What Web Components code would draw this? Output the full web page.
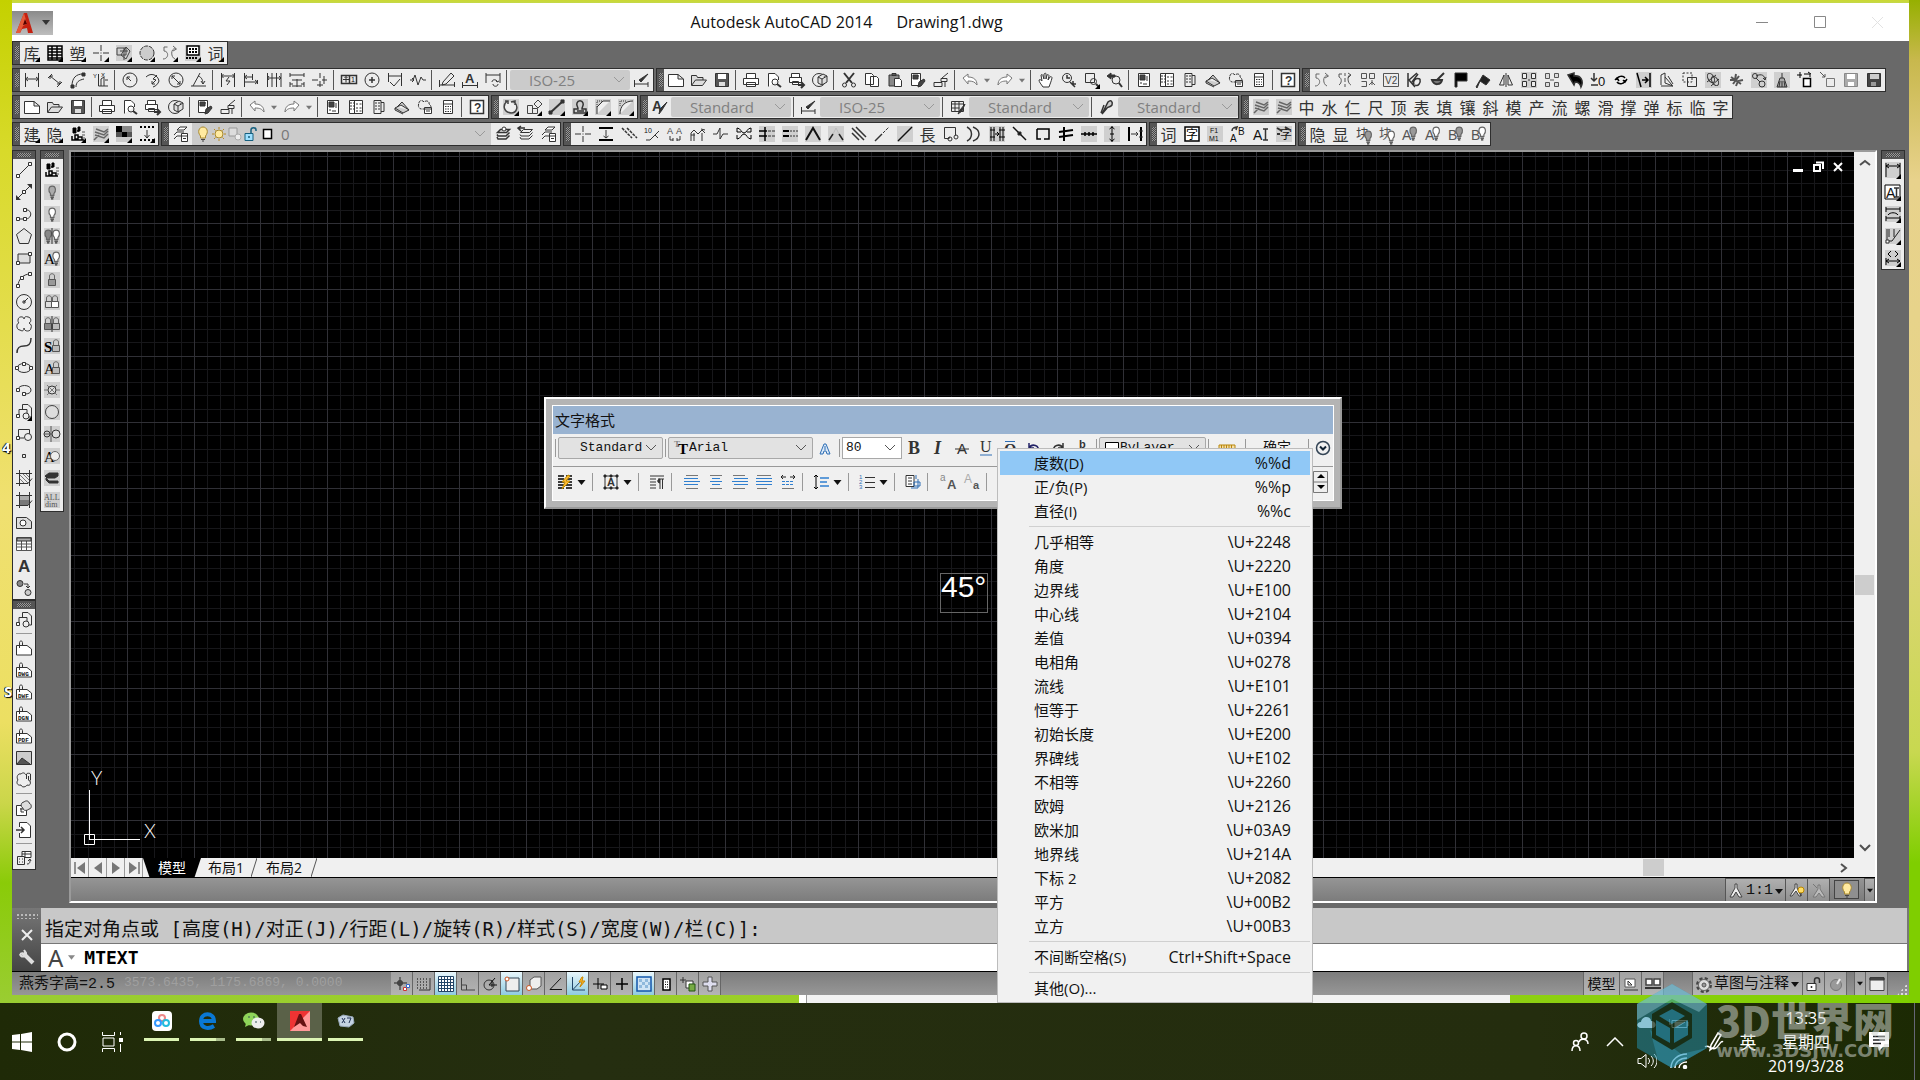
<!DOCTYPE html>
<html lang="zh-CN">
<head>
<meta charset="utf-8">
<title>Autodesk AutoCAD 2014</title>
<style>
html,body{margin:0;height:100%;overflow:hidden}
body{font-family:"Open Sans","Noto Sans CJK SC",sans-serif;font-size:15px;color:#111}
</style>
</head>
<body>
<cad-desktop></cad-desktop>
<script>
/* Icon library: every entry is a 16x16 drawing, either a bare path or svg markup. */
const T=(x,y,s,t,f='currentColor',ff='Liberation Sans',w='400')=>`<text x="${x}" y="${y}" font-size="${s}" fill="${f}" stroke="none" font-family="${ff}, 'Noto Sans CJK SC', sans-serif" font-weight="${w}">${t}</text>`;
const p=(d,a='')=>`<path d="${d}" ${a}/>`;
const bulb=(x,y,f)=>`<g transform="translate(${x} ${y}) scale(1.15)"><path d="M3 7.500C1 5.500 1 1 4.500 1S8 5.500 6 7.500V9H3z" fill="${f}" stroke="#666"/><path d="M3 10.500h3M3.500 12h2" stroke="#333"/></g>`;
const lockI=(x,c='#fff')=>`<g transform="translate(${x} 0)"><path d="M2.500 8.500V4c0-3 5-3 5 0v3" stroke="#666"/><path d="M1.500 7.500h7v6h-7z" fill="${c}" stroke="#555"/></g>`;
const attach=t=>p(`M.500 15V5.500H11L15.500 9v6z`,'fill="#fff"')+p('M3.500 8V2.500c0-2 3-2 3 0V6')+(t?T(2,14,6,t,'#111','Liberation Mono','700'):'');
const gz='<path d="M0 0h16v16H0z" fill="#cfcfcf" stroke="none"/>';
const layers='M5.500 3.500h9l-3 3h-9zM2 8.500l1 1.500h8l3.500-3.500M2 11l1 2h8l3.500-3.500';
const I={
 table:p('M1 1h14v14H1zM1 4h14M1 7h14M1 10h14M1 13h14M5 1v14M10 1v14','stroke="#000" stroke-width="1.500"'),
 cross:p('M8 0v6M8 7.500v1M8 10v6M0 8h6M10 8h6'),
 blk:gz+p('M1 3h9v7H1zM5 10l5-8 4 4-4 8zM4 6h8M8 3v12','stroke="#444"'),
 circg:'<circle cx="8" cy="8" r="7" fill="#ccc" stroke="#333" stroke-dasharray="4 1"/>',
 curl:p('M2 2h3.500M2 2v4c5 0 5 8-1 8M14 4c-5-2-6 8-1 10M11 1l3.500 3-3.500 2','stroke="#666"'),
 calc2:gz+p('M2 1h12v9H2z','fill="#fff" stroke="#000" stroke-width="1.500"')+p('M4 4h8M4 7h8M1 13h12','stroke="#000" stroke-width="2" stroke-dasharray="2 1"'),
 dlin:p('M1.500 1v14M14.500 1v14M1.500 7h13M4 5L1.500 7 4 9M12 5l2.500 2L12 9'),
 dali:p('M1 6l4-4M10 15l5-5M3 4l10 8M3 7V4h3M10 12h3V9'),
 darc:p('M2 14C2 6 6 2 13 2M6 15c0-5 3-7 8-8')+p('M1 13h3v3H1zM12 1h3v3h-3z','fill="#333"'),
 dord:p('M5.500 2v12M5.500 14H15M8 14V7l3-2v9M12 8h3')+T(0,6,6,'Y')+T(8,5,6,'X'),
 drad:'<circle cx="8" cy="8" r="7"/>'+p('M9 9L5 5M5 8V5h3'),
 djog:p('M1 5c5-5 12-2 13 4-1 3-3 5-6 6M12 3L8 7l3 1-4 4M7 9v3h3'),
 ddia:'<circle cx="8" cy="8" r="7"/>'+p('M4 4l8 8M4 7V4h3M9 12h3V9'),
 dang:p('M0 14h15M2 14L9 1M7 4c4 1 5 5 5 8M10 9l2 3 2-3'),
 qdim:p('M1.500 1v14M14.500 1v14M1.500 4h13M9 5L6 9h4l-3 4M3.500 2l-2 2 2 2M12.500 2l2 2-2 2'),
 dbas:p('M1.500 1v14M9.500 2v6M14.500 8v4M1.500 5h8M1.500 10h13M4 3L1.500 5 4 7M12 8l2.500 2L12 12'),
 dcon:p('M1.500 1v14M6 1v14M10.500 1v14M15 1v14M1.500 6H15M3 4L1.500 6 3 8M13 4l2 2-2 2'),
 dspc:p('M1 1v4M15 1v4M1 3h14M3 8h10M3 14h10M8 7v8M1 10v5M15 10v5M1 12h3M12 12h3'),
 dbrk:p('M8 1v5M8 9v6M0 8h6M10 8h5M12 4v8M5 13h6'),
 tol:p('M.500 3.500h15v8H.500zM8.500 3.500v8','stroke-width="1.500"')+p('M5 4.500v6M2 7.500h6M3.500 6L5 4.500 6.500 6')+T(10,10,7,'1'),
 cmark:'<circle cx="8" cy="8" r="7"/>'+p('M8 5v6M5 8h6','stroke-width="1.500"'),
 dinsp:p('M1.500 1v9M14.500 1v13M1.500 4h13M3 10l4 4 6-7'),
 djl:p('M0 8h3l2-5 3 10 3-8 2 3h3M2 6l2 2-2 2'),
 dedit:p('M.500 8v7M15.500 10v5M.500 13h15M4 10l8-9 3 3-8 8-4 1z'),
 dtedit:p('M.500 10v6M15.500 10v6M.500 13.500h15')+T(3,11,13,'A','#333','Liberation Sans','700'),
 dupd:p('M1 1v10M15 1v10M1 3h14M7 10c0-3 5-3 5 0M13 12c0 3-5 3-5 0M11 8l1 2 2-1'),
 dsty:p('M.500 8v7M14 10v5M.500 12H14M14 2L7 10l-2-2z','fill="#333"'),
 new:p('M.500 2.500H10L15.500 7v7.500H.500zM10 2.500V7h5.500','fill="#fff"'),
 open:p('M.500 13V3.500h5l1 2H12V8M.500 13.500l4-5.500h11l-4 5.500z','fill="#ddd"'),
 save:p('M1.500 1.500h13v13h-13z','fill="#555"')+p('M4 2h8v5H4z','fill="#fff" stroke="none"')+p('M5 10h6v4H5z','fill="#ddd" stroke="none"'),
 print:p('M3.500 6V1.500h9V6M.500 6.500h15v6H.500zM3.500 10.500h9v4h-9z','fill="#fff"'),
 prev:p('M2.500 14.500v-13H9L12.500 5v3','fill="#fff"')+'<circle cx="9" cy="10" r="3"/>'+p('M11 12l4 3','stroke-width="2"'),
 pub:p('M2.500 5V1.500h8V5M.500 5.500h12v5H.500zM3.500 9.500h6v3h-6z','fill="#fff"')+p('M9 13h6M12 10l3 3-3 3','stroke-width="2"'),
 ball:'<circle cx="7" cy="8" r="6.500"/>'+p('M6 5l5-3 4 2v6l-5 3-4-2zM6 5l4 2 5-3M10 7v6','fill="#ddd"'),
 match:p('M1.500 1.500h9v12h-9zM3 4h6','fill="#fff"')+p('M3 3h5v4H3zM9 10l5-3 1 2-4 5-3 1z','fill="#444"'),
 mspec:p('M1 10.500h8v4H1zM8 6.500h6v3H8zM9 6l6-5M12 10v5','fill="#eee"'),
 undo:p('M1 6l5-4v3c6 0 9 3 9 8-2-3-4-4-9-4v3z','fill="#fff" stroke="#777"'),
 redo:p('M15 6l-5-4v3C4 5 1 8 1 13c2-3 4-4 9-4v3z','fill="#fff" stroke="#777"'),
 prop:p('M2.500 1.500h11v13h-11z','fill="#fff"')+p('M4 3h5v5H4z','fill="#444"')+p('M4 11h2M7 12h4M11 4v5'),
 dc:p('M1.500 1.500h13v13h-13zM6.500 2v13','fill="#fff"')+p('M2 4h4M2 7h4M2 10h4M8 5h2M11.500 5h2M8 9h2M11.500 9h2M8 12h2M11.500 12h2','stroke-dasharray="2 1"'),
 tp:p('M3 1.500h7v13H3zM10 3.500h3v9h-3','fill="#eee"')+p('M4 4h2M7 4h2M4 7h2M7 7h2M4 10h2M7 10h2'),
 ssm:p('M1 9l8 5 6-3-8-5zM3 8l5-5 7 8M1 9v2l8 4','fill="#ccc"'),
 mark:p('M2 4c0-3 4-3 5-1 2-2 6-1 5 2 3 2 2 4 0 5H4C1 9 1 6 2 4z','stroke-dasharray="3 1"')+p('M7.500 8.500h7v6h-7zM7.500 10h7M9 12h4','fill="#fff"'),
 calc:p('M3.500 1.500h9v13h-9zM3.500 5h9','fill="#fff"')+p('M5 7.500h6M5 10h6M5 12.500h6','stroke-dasharray="1.500 1"'),
 help:p('M1.500 1.500h13v13h-13z','fill="#fff" stroke-width="1.500"')+T(5,13,12,'?','#333','Liberation Sans','700'),
 cut:p('M3 1l8 10M13 1L5 11','stroke-width="2"')+'<circle cx="3.500" cy="13" r="2"/><circle cx="12.500" cy="13" r="2"/>',
 copy:p('M1.500 1.500h6l2 2v9h-8zM6.500 4.500h6l2 2v8h-8z','fill="#fff"'),
 paste:p('M2 3h10v11H2zM5 1.500h4v2H5z','fill="#888"')+p('M7.500 6.500h5l2 2v6h-7z','fill="#fff"'),
 pan:p('M5 15c-2-3-4-5-4-7 1-1 2 0 3 1L3 3c1-1 2 0 2 1l1 3V2c1-1 2-1 2 0v5l1-4c1-1 2 0 2 1l-1 4 2-3c1-1 2 0 2 1-1 4-2 6-3 9z','fill="#fff"'),
 zrt:'<circle cx="6" cy="6" r="4.500"/>'+p('M6 3v3h3M9 10l5 5M12 9v3h3','stroke-width="1.500"'),
 zwin:p('M1.500 1.500h9v9h-9z')+'<circle cx="9.500" cy="9.500" r="3"/>'+p('M12 12l3 3','stroke-width="2"'),
 zprev:'<circle cx="9" cy="8" r="4"/>'+p('M12 11l3 4','stroke-width="2"')+p('M0 4l4-3v2h4v2H4v2z','fill="#333"'),
 mir2:p('M2 2h3M2 2v3c3 1 3 6 0 8M14 3c-4-1-4 8 0 10M8 1v3M8 6v4M8 12v3M11 1l3 2-3 3','stroke="#555"'),
 sq4:p('M1.500 1.500h5v5h-5zM9.500 1.500h5v5h-5zM1.500 9.500h5v5h-5M12 8v5M9 13l3-3 3 3','stroke="#555"'),
 v2:p('M.500 1.500h15v13H.500z','stroke="#555"')+T(2,12,10,'V2','#444'),
 kk:p('M2 1v14M3 8l8-7M3 8l6 7M6 10l6-8M8 13c-2-4 2-8 6-6M9 13c3 2 6-2 5-6','stroke-width="1.500"'),
 brush:p('M3 8h10c-1 5-8 6-10 0zM15 1L8 8','fill="#777" stroke-width="2"'),
 flag:p('M4 1h11v8H5v6H3V1z','fill="#000"'),
 flag2:p('M1 15L8 3l7 5-4 5-6-4-3 7z','fill="#222"'),
 mir:p('M6 3v10H1.500zM10 3v10h4.500zM8 1v14'),
 arr:gz+p('M1.500 1.500h4v5h-4zM10.500 1.500h4v5h-4zM1.500 9.500h4v5h-4zM10.500 9.500h4v5h-4zM7 8h2','fill="#eee"'),
 arr2:p('M1.500 1.500h4v5h-4zM10.500 1.500h4v4h-4zM1.500 10.500h4v4h-4zM10.500 10.500h4v4h-4zM6 8h4','stroke="#555" fill="#ddd"'),
 uarr:p('M1 3l6-2v3c7-1 10 5 7 11-1-4-4-5-6-5l-1 3z','fill="#000" stroke-width="1.500"'),
 z0:p('M4 1v8M1 6l3 3 3-3M1 13h7','stroke-width="1.500"')+T(8,14,13,'0'),
 rr:p('M4 8c0-4 6-5 8-2M12 8c0 4-6 5-8 2M2 8l2-2 2 3M10 8l2 2 2-3','stroke="#000" stroke-width="1.500"'),
 ext:gz+p('M1 1l4 14M14 1v14M6 8h5M9 5l3 3-3 3','stroke="#000" stroke-width="1.500"'),
 para:p('M2 13V3l4-2v10l8 3H2M6 5l7 8M9 4l5 8','fill="#eee"'),
 dsq:p('M1 1h9v9H1z','stroke-dasharray="2 1.500"')+p('M5.500 5.500h9v9h-9z'),
 coil:gz+'<ellipse cx="6" cy="6" rx="3" ry="5" transform="rotate(-30 6 6)"/><ellipse cx="10" cy="9" rx="3" ry="5" transform="rotate(-30 10 9)"/>'+p('M2 10l9-7M6 14l8-7'),
 coil2:p('M3 5l10 7M2 8h5l1-6M8 14l2-5 5-1M11 4l-6 8','stroke="#555" stroke-width="2"'),
 gear2:gz+'<circle cx="4" cy="4" r="2.500"/><circle cx="11" cy="12" r="3"/>'+p('M5 4c6-3 9 0 9 4M5 6l4 4M12 6l2 2 1-3'),
 broom:gz+p('M8 1v5M6 6h4l3 9H3zM6 9l-1 6M8 9v6M10 9l1 6','fill="#aaa"'),
 plus2:p('M6.500 6.500h7v8h-7z','stroke="#000" stroke-width="1.500" fill="#fff"')+p('M0 3h5M3 0v6M7 2h6v3M11 0l3 2','stroke="#000"'),
 sqin:p('M6.500 6.500h8v8h-8z','stroke="#777"')+p('M0 0l5 5M5 2v3H2','stroke="#555"'),
 disk:p('M1.500 1.500h13v13h-13z','fill="#aaa" stroke="#888"')+p('M4 2h8v5H4zM5 10h6v4H5z','fill="#fff" stroke="none"'),
 disk2:p('M1.500 1.500h13v13h-13z','fill="#444"')+p('M4 2h9v5H4z','fill="#ccc" stroke="none"')+p('M5 10h5v4H5z','fill="#999" stroke="none"'),
 rot:gz+p('M4 2c-5 5-3 11 4 12 6 0 8-7 3-11M2 2h3v3M8 3l4-1v4','stroke="#444" stroke-width="1.500" fill="#eee"'),
 scale:p('M1.500 6.500h5v8h-5zM6.500 9.500h5v5h-5zM8 5l4-4 4 4-4 4z','stroke="#444"'),
 line2:gz+p('M1 14L14 2','stroke-width="2"')+p('M0 12h3v3H0zM12 1h3v3h-3z','fill="#333"'),
 stamp:gz+p('M2 14h12v-4h-4c0-3 2-3 1-6-1-3-5-3-6 0-1 3 1 3 1 6H2zM5 12h7','stroke-width="1.500"'),
 chf:gz+p('M2 15V8l6-6h7','fill="#eee"')+p('M2 8V2h6','stroke-dasharray="1 1"'),
 fil:gz+p('M2 15C2 7 7 2 15 2','fill="#eee"')+p('M2 7V2h6','stroke-dasharray="1 1"'),
 tsty:T(0,12,14,'A','#333','Liberation Sans','700')+p('M15 3l-5 8-3 4 1-5z','fill="#333"'),
 tbsty:p('M1.500 2.500h12v10h-12zM1.500 5h12M1.500 9h8M5 3v9M9 3v9')+p('M15 5l-5 6-2 4 4-3z','fill="#333"'),
 mlsty:p('M2 14L5 6M9 3c3-3 5 0 4 3-2 3-4 1-5 3l-5 6z','fill="#ccc" stroke-width="1.500"'),
 lay3:gz+p('M3 3l8 3 4-3M2 6l9 3 4-4M2 9l9 3 4-4M1 14l5-5','stroke="#666" stroke-width="1.500"'),
 swirl:gz+'<ellipse cx="8" cy="8" rx="6" ry="3" transform="rotate(-35 8 8)"/><ellipse cx="9" cy="10" rx="6" ry="3" transform="rotate(-35 9 10)"/>'+p('M2 4l5-3 6 2'),
 bars:p('M2 10v4h12M5 13V9h3v4zM7 5h2M8 11h4v3','stroke="#000" stroke-width="1.500"')+p('M3 2h3v5H3zM8 1h2v4H8z','fill="#000" stroke="#000"')+p('M12 6h3M12 9h3M12 12h3','stroke="#555"'),
 chk:p('M0 0h16v16H0z','fill="#ccc" stroke="none"')+p('M0 0h6v6H0zM6 6h5v5H6z','fill="#000" stroke="none"')+p('M11 0h5v6h-5zM6 0h5v6H6z','fill="#888" stroke="none"')+p('M0 6h6v5H0zM11 6h5v5h-5z','fill="#555" stroke="none"'),
 dots:p('M1 1h14','stroke="#000" stroke-width="2" stroke-dasharray="2 2"')+p('M1 14h14','stroke="#000" stroke-width="2" stroke-dasharray="2 2"')+p('M8 4v8M5.500 9L8 12l2.500-3'),
 laypr:p('M4 4h7l3-3H7zM1 9l3-3h7M1 13l3-3h4M8.500 7.500h6v8h-6zM8.500 10h6M10 12.500h3','fill="#fff"'),
 laya:p(layers,'stroke-width="1.500"')+'<circle cx="9" cy="3" r="2" fill="#fff"/>',
 layb:p(layers)+p('M0 2h7M3 0L0 2l3 3','stroke-width="1.500"'),
 ibeam:p('M1 2h14M1 14h14','stroke="#000" stroke-width="2"')+p('M8 4v8M5.500 10L8 12l2.500-2'),
 dd:p('M1 2l10 10M6 2l10 10','stroke-dasharray="3 1" stroke-width="1.500"'),
 ten:T(0,7,7,'10')+p('M2 14h4l9-9M11 9l3 3'),
 aa:T(0,8,9,'A','#444')+T(9,8,9,'A','#444')+p('M3 10v4h3M13 10v4h-3M6 12v3M10 12v3'),
 mm:p('M1 15V7l3-3 4 4 4-4 3 3M4 7v8M12 7v8M1 9h4M11 3l4 1'),
 zz:p('M0 8h4l3-6v11l3-5h5'),
 xx:p('M1 2c4 0 4 5 7 5s3-5 7-5M1 13c4 0 4-5 7-5s3 5 7 5M1 2v4h4M15 2v4h-4M1 13V9M15 13V9','stroke="#000"'),
 hh:gz+p('M9 5h7M9 10h7','stroke-dasharray="3 1"')+p('M6 1v14M0 5h8M0 10h8','stroke="#000" stroke-width="1.500"'),
 hh2:gz+p('M1 5h6M1 10h6','stroke="#000" stroke-width="2"')+p('M8 5h8M8 10h8','stroke-dasharray="2 1"'),
 vv:gz+p('M1 14L8 2l7 12','stroke="#111" stroke-width="2"'),
 vv2:gz+p('M1 14l4-6M15 14l-4-6','stroke="#222" stroke-width="1.500"')+p('M5 8l3-6 3 6','stroke="#bbb"'),
 hat:p('M1 2l12 12M5 1l10 10M1 7l7 7','stroke-width="1.500"'),
 ldot:p('M1 15L8 8','stroke-width="1.500"')+p('M9 7l6-6','stroke-dasharray="3 1"'),
 lgz:gz+p('M1 15L15 1','stroke="#111" stroke-width="1.500"'),
 boxr:p('M1.500 1.500h11v8M1.500 1.500v11h5M4 13l3-2')+'<circle cx="7" cy="13" r="2"/><circle cx="13" cy="11" r="2"/>',
 arcs:p('M1 1c6 3 6 11 0 14M7 1c8 3 8 11 0 14','stroke-width="1.500"'),
 hdim:gz+p('M2 1v14M5 1v14M11 1v14M14 1v14M1 4h5M1 11h5M10 4h6M10 11h6M6 8h4M8 6l2 2-2 2','stroke="#000"'),
 back:p('M1 1l13 13','stroke="#111" stroke-width="1.500"')+p('M6 6h3v3H6z','fill="#111"'),
 rect2:p('M2 3h12v10h-5M2 3v10h4M14 6v4','stroke="#000" stroke-width="1.500"'),
 hash:p('M1 6l14-2M1 11l14-2M6 15V1','stroke="#000" stroke-width="2"'),
 hl:gz+p('M0 8h16M4 6v4M8 6v4M12 6v4','stroke="#000" stroke-width="1.500"'),
 vl:gz+p('M8 0v16M5.500 3L8 1l2.500 2M5.500 13L8 15l2.500-2M6 8h4','stroke="#000"'),
 vs:p('M2 1v14M14 1v14','stroke="#000" stroke-width="2"')+p('M4 8h7M9 6l2 2-2 2M12 5h4M12 11h4'),
 zi:p('M1 1h14v14H1z','fill="#fff" stroke="#000" stroke-width="1.500"')+T(2,13,12,'字','#000'),
 f1:gz+T(3,7,7,'F1')+T(2,15,7,'M1'),
 ab:T(0,16,10,'A')+T(8,9,10,'B')+p('M2 5c0-3 3-4 5-4M4 2l3-1-1 3','stroke-width="1.500"'),
 ai:T(0,14,14,'A')+p('M10 3h5M10 14h5M12.500 3v11','stroke-width="1.500"'),
 zix:gz+T(4,13,12,'字')+p('M1 2l5 3M1 8h3M9 1l5 3','stroke-width="2"'),
 kb1:T(0,12,13,'块','#444')+bulb(7,4,'#999'),kb2:T(0,12,13,'块','#555')+bulb(7,4,'#fff'),
 ab1:T(0,14,14,'A','#555')+bulb(6,0,'#999'),ab2:T(0,14,14,'A','#555')+bulb(6,0,'#fff'),
 bb1:T(0,14,14,'B','#555')+bulb(6,0,'#999'),bb2:T(0,14,14,'B','#555')+bulb(6,0,'#fff'),
 /* draw palette */
 line:p('M2.500 13.500l11-11')+p('M.500 12.500h3v3h-3zM12.500.500h3v3h-3z','fill="#fff"'),
 xline:p('M1 15L15 1')+p('M0 16v-5l5 5zM16 0v5l-5-5z','fill="#333" stroke="none"')+p('M6.500 6.500h3v3h-3z','fill="#fff"'),
 pline:p('M2 13h7M8 4c9-2 9 10 0 9M7 4h2')+p('M.500 11.500h3v3h-3zM7.500 2.500h3v3h-3zM7.500 11.500h3v3h-3z','fill="#fff"'),
 polyg:p('M8 .500l7.500 6-3 9h-9l-3-9z','fill="#e8e8e8"'),
 rect:p('M2 4h12v9H2z','fill="#ddd"')+p('M.500 11.500h3v3h-3zM12.500 2.500h3v3h-3z','fill="#fff"'),
 arc:p('M2 14C2 8 7 2 14 2')+p('M.500 12.500h3v3h-3zM4.500 4.500h3v3h-3zM12.500.500h3v3h-3z','fill="#fff"'),
 circ:'<circle cx="8" cy="8" r="7.500" fill="#eee"/>'+p('M8 8l4-4M7 7h2v2H7z'),
 cloud:p('M8 3c0-3-6-3-6 1 0 1 0 2 1 3-3 0-3 7 1 7 3 2 4 0 4-2 0 4 7 4 7 0 1-2 0-4-2-5 3-1 2-6-1-6-2-1-4 0-4 2z','fill="#eee"'),
 spl:p('M1 15c0-6 3-7 7-7s7-1 7-8','stroke-width="1.500"'),
 ell:'<ellipse cx="8" cy="8" rx="7" ry="4.500"/>'+p('M-.500 6.500h3v3h-3zM13.500 6.500h3v3h-3zM6.500 2.500h3v3h-3z','fill="#fff"'),
 ella:p('M2 8c0-6 13-6 13 0 0 3-3 4-6 4')+p('M.500 6.500h3v3h-3zM6.500 10.500h3v3h-3z','fill="#fff"'),
 ins:p('M6.500 6V.500H12L15.500 4v9H12M3 12V5.500h8V9','fill="#eee"')+'<circle cx="10" cy="12" r="3" fill="#eee"/>'+p('M.500 10.500h3v3h-3z','fill="#fff"'),
 mkb:p('M2.500 12V3.500h11V9M2 12h6','fill="#eee"')+'<circle cx="12" cy="11" r="3.500" fill="#eee"/>'+p('M.500 10.500h3v3h-3z','fill="#fff"'),
 pt:p('M6.500 6.500h3v3h-3z'),
 hatch:p('M3.500 0v16M0 3.500h16M13.500 0v16M0 13.500h12l4-5')+p('M4 5l8 8M4 9l4 4M7 4l6 6M10 4l3 3','stroke="#777"'),
 grad:p('M4 4h9v5H4z','fill="#aaa" stroke="none"')+p('M4 8h9v5H4z','fill="#777" stroke="none"')+p('M3.500 0v16M0 3.500h16M13.500 0v16M0 13.500h12l4-5'),
 reg:p('M.500 3.500h10l5 4v7H.500z','fill="#ddd"')+'<circle cx="7" cy="9" r="3" fill="#fff"/>',
 tab:p('M.500 1.500h15v13H.500zM.500 8h15M.500 11h15M5.500 5v9M10.500 5v9','fill="#fff" stroke="#555"')+p('M1 2h14v3H1z','fill="#aaa"'),
 A:T(2,14,17,'A','#333','Liberation Sans','700'),
 adds:'<circle cx="4" cy="3.500" r="3" fill="#888"/><circle cx="12" cy="12.500" r="3" fill="#ccc"/>'+p('M8 4h4v4M10 6l2 2 2-2'),
 at:attach(''),dwg:attach('DWG'),dwf:attach('DWF'),dgn:attach('DGN'),pdf:attach('PDF'),
 img:p('M.500 1.500h15v13H.500z','fill="#ccc"')+p('M1 14l5-6 4 3 4 3','fill="#555"'),
 pc:p('M5 2c2-2 4-1 5 1M2 8C0 5 2 1 5 2M2 8c-2 2-1 6 3 5 1 3 5 2 6 0 3 1 4-1 3-4','fill="#eee"')+p('M10.500 7V2c0-1 4-1 4 0v6c0 1-2 1-2 0V4'),
 g1:p('M.500 5.500h10v10H.500zM4 9h3M5 8v4h3','fill="#fff"')+p('M8 2c2-2 5-1 5 1 3 1 3 6 0 6-2 2-6 2-6-1-3-1-2-6 1-6z','fill="#ddd"'),
 imp:p('M3.500 5V.500H11L14.500 4v11.500h-11V11','fill="#fff"')+p('M0 8h8M5 5l3 3-3 3','stroke-width="1.500"'),
 ole:p('M6 1.500h9v6H6zM6 4h9M9 2v5','fill="#fff"')+p('M1.500 6.500h7v8h-7zM3 9h1M6 9h1M3 12h1M6 12h1','fill="#eee"')+p('M11 14c3 0 3-2 3-4M12 11l2-2 1 2'),
 /* layer palette */
 b1:gz+bulb(3,1,'#aaa'),b2:gz+bulb(3,1,'#fff'),b3:gz+bulb(-1,1,'#888')+bulb(7,1,'#fff')+p('M8 0v16'),
 b4:gz+T(0,14,15,'A','#000','Liberation Serif')+bulb(7,1,'#fff'),
 l1:gz+lockI(3,'#999'),l2:gz+lockI(0,'#ddd')+lockI(6),l3:gz+lockI(-1,'#888')+lockI(7,'#bbb')+p('M8 0v16'),
 l4:gz+T(0,14,15,'S','#000','Liberation Serif','700')+lockI(7,'#bbb'),l5:gz+T(0,14,15,'A','#000','Liberation Serif')+lockI(7,'#bbb'),
 sn:gz+'<circle cx="8" cy="8" r="4" fill="#ddd"/>'+p('M0 8h4M12 8h4M3 3l10 10M13 3L3 13','stroke="#777"'),
 o1:gz+'<circle cx="8" cy="8" r="6.500" fill="#ddd" stroke="#444"/>',
 o2:gz+'<circle cx="3" cy="8" r="3" /><circle cx="12" cy="8" r="4" fill="#ddd"/>'+p('M7 0v16M0 8h8','stroke="#555"'),
 o3:gz+T(0,14,15,'A','#000','Liberation Serif')+'<circle cx="11" cy="8" r="4.500" fill="#eee" stroke="#666"/>',
 st:gz+p('M1 6l4-3h9v3l-3 2H3zM2 8l3 3h9v2H5L2 10z','fill="#333"'),
 all:gz+T(0,8,8,'ALL','#555','Liberation Serif')+T(1,15,8,'dim','#555','Liberation Serif'),
 /* right palette */
 r1:gz+p('M1 1v14M15 1v14M1 4h14M4 2L1 4l3 2M12 2l3 2-3 2','stroke="#000"'),
 r2:p('M0 1h15v14H0z','stroke="#000" fill="#fff"')+T(1,14,14,'A')+p('M9 4h5M9 13h5M11.500 4v9','stroke-width="1.500"'),
 r3:gz+p('M1 1v5M15 1v5M1 3h14M1 10v5M15 10v5M3 9c2-3 8-3 10 0M1 12h14','stroke="#000"'),
 r4:gz+p('M2 1v12h5M4 1v8M15 2L7 13M9 1v8','stroke="#222"')+p('M1 12h3v3H1z','fill="#fff"'),
 r5:gz+p('M1 8v7M1 11h14M4 9l-3 2 3 2M12 9l3 2-3 2M6 1L3 4l3 3M10 1l3 3-3 3','stroke="#000"'),
 /* status bar */
 s1:p('M6 1v13M0 7h13M4 5h4v4H4z','stroke="#222"')+p('M9.500 11.500h3v3h-3z','fill="#fff" stroke="#c33"')+p('M12.500 8.500h3v3h-3z','fill="#fff" stroke="#36c"'),
 s2:p('M1 3h12M1 6h12M1 9h12M1 12h12','stroke="#000" stroke-dasharray="1 2"')+p('M14 2v12H3'),
 s3:p('M.500.500h15v15H.500z','stroke="#246" fill="#fff"')+p('M3.500 0v16M6.500 0v16M9.500 0v16M12.500 0v16M0 3.500h16M0 6.500h16M0 9.500h16M0 12.500h16','stroke="#246"'),
 s4:p('M1.500 2v12H15M1.500 9h5v5','stroke="#444"'),
 s5:'<circle cx="7" cy="9" r="5"/>'+p('M7 9h8M7 9l6-7M10 4v7','stroke="#111"'),
 s6:p('M2 2h13v13H2z','fill="#eee" stroke="#345"')+'<circle cx="3" cy="3" r="2" fill="#fff" stroke="#c52"/>',
 s7:p('M4 4l4-3h7v9l-4 3H4z','fill="#eee" stroke="#555"')+'<circle cx="3" cy="12" r="2.500" fill="#fff" stroke="#c52"/>',
 s8:p('M13 2L2 13.500h12','stroke="#111"'),
 s9:p('M2.500 1v13H15M2.500 14L12 4','stroke="#246"')+p('M12 1L9 6h3l-2 5 5-6h-3l1-4z','fill="#fb3" stroke="#c80"'),
 s10:p('M6 2v11M1 8h11','stroke="#000"')+p('M9 9h6v4H9z','fill="#fff" stroke="#000"'),
 s11:p('M8 2v12M2 8h12','stroke="#000" stroke-width="1.500"'),
 s12:p('M1 1h14v14H1z','fill="#cfe4f5" stroke="#15a" stroke-width="1.500"')+p('M3 3h3v3H3zM9 3h3v3H9zM6 6h3v3H6zM12 6h2v3h-2zM3 9h3v3H3zM9 9h3v3H9z','fill="#8fb9dc" stroke="none"'),
 s13:p('M5 3h7v11H5z','fill="#fff" stroke="#000" stroke-width="1.500"')+p('M7 6h4M7 8.500h4M7 11h4','stroke="#000" stroke-dasharray="1 1"'),
 s14:p('M0 4h6M3 1v6M6 5h7v7H6z','fill="#fff"')+p('M9 8h6v7H9z','fill="#7a4" stroke="#251"'),
 s15:p('M6 1h4v5h5v4h-5v5H6v-5H1V6h5z','fill="#dde" stroke="#555"'),
 m1:p('M2 3h10v8H2z','fill="#fff" stroke="#555"')+p('M5 5v4h4zM1 14h14','stroke="#333"'),
 m2:p('M1 3h6v6H1zM9 3h6v6H9z','fill="#fff" stroke="#444" stroke-width="1.500"')+p('M0 12h16','stroke-width="2"'),
 gear:'<circle cx="8" cy="8" r="6" fill="none" stroke="#444" stroke-width="4" stroke-dasharray="2.700 2"/><circle cx="8" cy="8" r="5.500" fill="#ddd" stroke="#666"/><circle cx="8" cy="8" r="2" fill="#999" stroke="#555"/>',
 ulock:p('M1 7.500h9v7H1z','fill="#fff" stroke="#333"')+p('M8.500 7V4c0-3 5-3 5 0v3M5.500 10v2','stroke="#333" stroke-width="1.500"'),
 orb:'<circle cx="8" cy="9" r="5.500" fill="#999" stroke="#777"/>'+p('M9 8l3-5','stroke="#eee" stroke-width="2"'),
 win:p('M1 1.500h14v13H1z','fill="#eee" stroke="#444"')+p('M1 2h14v2H1z','fill="#555"'),
 ann:p('M7 1h2v4l5 9h-3L8 9l-3 5H2l5-9z','fill="#eee" stroke="#444"'),
 annb:p('M6 2h2v4l4 8h-2L7 9l-4 5H1l5-8z','fill="#eee" stroke="#444"')+'<circle cx="12" cy="8" r="3" fill="#fd6" stroke="#b80"/>'+p('M12 11v3'),
 anng:p('M7 3h2v4l5 8h-3L8 11l-3 4H2l5-8zM2 2l4 4','fill="#bbb" stroke="#777"'),
 bulbY:`<path d="M5.500 10C2 6 4 1 8 1s6 5 2.500 9v2h-5z" fill="#ffeaa0" stroke="#a98a30"/><path d="M6 13.500h4M7 15h2" stroke="#444"/>`,
 sun:'<circle cx="8" cy="8" r="4" fill="#ffeaa0" stroke="#a98a30"/>'+p('M8 1v2M8 13v2M1 8h2M13 8h2M3 3l1.500 1.500M13 3l-1.500 1.500M3 13l1.500-1.500M13 13l-1.500-1.500','stroke="#b98a20"'),
 vp:p('M2 2h8v8H2z','fill="#ddd" stroke="#999"')+'<circle cx="11" cy="11" r="3" fill="#eee" stroke="#aaa"/>',
 lockb:p('M2 7.500h8v7H2z','fill="#9fe0ff" stroke="#17607f"')+p('M8 7V4c0-3 5-3 5 0v1M6 10v2','stroke="#17607f" stroke-width="1.500"'),
 sqw:p('M4.500 3.500h8v9h-8z','fill="#fff" stroke="#000" stroke-width="1.500"'),
 sqb:p('M.500 2.500h13v12H.500z','fill="#fff" stroke="#000"'),
 /* text format dialog */
 ann2:p('M7 4h2l4 10h-3l-1-3H7l-1 3H3z','fill="#dbe9f8" stroke="#2f6fb5"')+p('M8 6v4','stroke="#2f6fb5"'),
 B:T(2,14,18,'B','#333','Liberation Serif','700'),It:`<g font-style="italic">${T(4,14,18,'I','#333','Liberation Serif','700')}</g>`,
 St:T(3,14,15,'A','#333','Liberation Sans')+p('M1 9h14'),U:T(2,12,16,'U','#333','Liberation Serif')+p('M2 15h12','stroke="#2f6fb5"'),
 O:T(2,15,16,'O','#333','Liberation Serif','700')+p('M3 1.500h10','stroke="#2f6fb5"'),
 und:p('M3 3v5h5M3 8c3-5 11-3 9 4','stroke="#226" stroke-width="1.500"'),red:p('M13 3v5H8M13 8C10 3 2 5 4 12','stroke="#333" stroke-width="1.500"'),
 ba:T(5,8,11,'b','#333','Liberation Sans','700')+p('M3 10h10')+T(5,18,9,'a'),
 rul:p('M0 5h16v8H0z','fill="#f6dfa8" stroke="#b8860b"')+p('M2.500 5v4M5 5v3M7.500 5v4M10 5v3M12.500 5v4','stroke="#b8860b"'),
 opt:'<circle cx="8" cy="8" r="6.500" stroke="#345" stroke-width="1.500"/>'+p('M5 6.500l3 3 3-3','stroke="#123" stroke-width="2"'),
 cols:p('M1 2h6M1 5h6M1 8h6M1 11h6M1 14h6M9 2h6M9 5h6M9 8h6M9 11h6M9 14h6','stroke="#000" stroke-width="1.500"')+p('M11 1L5 8h3l-3 7 8-8H9l4-5z','fill="#fb3" stroke="#b80"'),
 just:p('M2 2h12v12H2z')+p('M1 1h2v2H1zM13 1h2v2h-2zM1 13h2v2H1zM13 13h2v2h-2zM7 1h2v2H7zM7 13h2v2H7z','fill="#000"')+T(4,12,11,'A','#333','Liberation Sans','700'),
 par:p('M1 2h14M1 5h6M1 8h6M1 11h6M1 14h6','stroke="#333"')+p('M9 5h6M11 5v10M13.500 5v10M11 9c-3 0-3-4 0-4','fill="#333"'),
 al1:p('M2 1.500h12M2 14.500h12','stroke="#777"')+p('M0 4.500h14M0 7.500h16M0 10.500h14','stroke="#2f7fd0"'),
 al2:p('M2 1.500h12M2 14.500h12','stroke="#777"')+p('M4 4.500h8M2 7.500h12M4 10.500h8','stroke="#2f7fd0"'),
 al3:p('M1 1.500h12M1 14.500h12','stroke="#777"')+p('M2 4.500h14M0 7.500h16M2 10.500h14','stroke="#2f7fd0"'),
 al4:p('M1 1.500h14M1 14.500h10','stroke="#777"')+p('M0 4.500h16M0 7.500h16M0 10.500h16','stroke="#2f7fd0"'),
 al5:p('M1 3h5M10 3h5M3 1L1 3l2 2M13 1l2 2-2 2','stroke="#222"')+p('M2 7.500h12M2 10.500h12','stroke="#2f7fd0" stroke-dasharray="3 1"')+p('M2 14.500h12','stroke="#777"'),
 lsp:p('M3 1v14M1 3l2-2 2 2M1 13l2 2 2-2','stroke="#000"')+p('M7 4h9M7 8h7M7 12h9','stroke="#2f7fd0" stroke-width="1.500"'),
 num:p('M6 3.500h10M6 8.500h10M6 13.500h10','stroke="#333"')+T(0,5,6,'1','#2f6fb5')+T(0,10,6,'2','#2f6fb5')+T(0,15,6,'3','#2f6fb5'),
 fld:p('M1 1.500h8v11H1zM3 4h4M3 7h4M3 10h4','fill="#fff" stroke="#333"')+p('M11 1v4M13 5v9H6M9 8h6v4H9z','stroke="#2f6fb5"'),
 uc:T(0,7,10,'a','#888')+T(7,15,13,'A','#555','Liberation Sans','700'),lc:T(0,9,12,'A','#aaa')+T(9,15,11,'a','#555','Liberation Sans','700'),
 truet:T(0,7,9,'T','#888','Liberation Serif','700')+T(4,14,15,'T','#000','Liberation Serif','700'),
 first:p('M3 2v12')+p('M13 2L5 8l8 6z','fill="#777" stroke="none"'),prv:p('M12 2L4 8l8 6z','fill="#777" stroke="none"'),
 nxt:p('M4 2l8 6-8 6z','fill="#777" stroke="none"'),last:p('M13 2v12')+p('M3 2l8 6-8 6z','fill="#777" stroke="none"')
};
const icon=(n,s=16)=>{const d=I[n]||'';return `<svg width="${s}" height="${s}" viewBox="0 0 16 16" overflow="visible" fill="none" stroke="#333" aria-hidden="true">${d[0]==='<'?d:p(d)}</svg>`};
const chev='<svg class="chev" width="14" height="8" viewBox="0 0 14 8" fill="none" stroke="currentColor" aria-hidden="true"><path d="M2 1l5 5 5-5"/></svg>';
const tri=(s=8)=>`<svg width="${s}" height="5" viewBox="0 0 8 5" aria-hidden="true"><path d="M0 0h8L4 5z" fill="currentColor"/></svg>`;
const base=`:host,*{box-sizing:border-box}button{appearance:none;border:0;background:none;padding:0;margin:0;font:inherit;color:inherit;display:flex;align-items:center;justify-content:center;flex:none}svg{display:block;flex:none}select,input{appearance:none;border:0;background:none;margin:0;padding:0;font:inherit;color:inherit;opacity:1;outline:0}`;
const define=(tag,render,after)=>customElements.define(tag,class extends HTMLElement{
  constructor(){super();this.attachShadow({mode:'open'})}
  connectedCallback(){const t=document.createElement('template');t.innerHTML=render(this);this.shadowRoot.replaceChildren(t.content.cloneNode(true));after&&after(this)}
});

define('cad-select',el=>`<style>${base}
:host{display:grid;flex:none;align-items:center;overflow:hidden}
select{grid-area:1/1;width:100%;height:100%;padding-left:var(--pad,19px)}
.chev{grid-area:1/1;justify-self:end;margin-right:var(--chev,4px);color:var(--chevc,#999)}
.lead{grid-area:1/1;margin-left:5px}</style>
<select aria-label="${el.getAttribute('label')}" ${el.hasAttribute('disabled')?'disabled':''}><option>${el.getAttribute('value')}</option></select>
${el.hasAttribute('lead')?`<span class="lead">${icon(el.getAttribute('lead'))}</span>`:''}${chev}`);

/* Toolbar: items is a list of tokens — icon name, "~x" glyph, "|" divider, "," drop arrow, "=x" drop-down. A final dot adds a flyout mark. */
define('tool-bar',el=>{
  const v=el.hasAttribute('vertical');
  const body=(el.getAttribute('items')||'').trim().split(/\s+/).map(t=>{
    if(t==='|')return '<i class="sep"></i>';
    if(t===',')return `<button class="drop" aria-label="more">${tri(6)}</button>`;
    if(t[0]==='=')return `<cad-select class="combo" label="style" value="${t.slice(1)}" disabled></cad-select>`;
    if(t==='*')return `<span class="layer">${['bulbY','sun','vp','lockb','sqw'].map(n=>icon(n)).join('')}<cad-select label="layer" value="0" disabled></cad-select></span>`;
    const f=t.endsWith('.')?'<b></b>':'';t=t.replace(/\.$/,'');
    return t[0]==='~'?`<button class="g">${t.slice(1)}${f}</button>`:`<button aria-label="${t}">${icon(t)}${f}</button>`;
  }).join('');
  return `<style>${base}
:host{display:flex;flex:none;border:1px solid #2e2e2e;background:#ececec;${v?'flex-direction:column;width:24px':'height:24px'}}
.grip{background:#555;flex:none;display:flex;align-items:center;justify-content:center;${v?'height:8px':'width:7px'}}
.grip:before{content:"";${v?'width:14px;height:4px':'width:4px;height:14px'};background:repeating-conic-gradient(#999 0 25%,#444 0 50%) 0 0/2px 2px}
button{position:relative;${v?'height:22px;width:22px':'width:23px;height:22px'}}
.g{font:16px/20px "Noto Sans CJK SC",sans-serif;color:#333}
.drop{width:12px;color:#777}
b{position:absolute;right:3px;bottom:2px;border:solid transparent;border-width:0 0 5px 5px;border-bottom-color:#000}
.sep{flex:none;${v?'height:1px;margin:2px 3px 3px;background:#999':'width:1px;margin:1px 3px 1px 2px;background:#555'}}
.combo{width:120px;height:20px;margin:1px 0;background:#cbcbcb;border-radius:2px;color:#808080}
.layer{display:flex;align-items:center;width:299px;background:#cbcbcb;padding-left:3px;color:#777}
.layer cad-select{flex:1;height:22px;--pad:6px}
</style><div class="grip"></div>${body}`});

define('title-bar',()=>`<style>${base}
:host{display:flex;height:38px;background:#fff;align-items:center;flex:none}
.app{width:41px;height:24px;background:linear-gradient(#8a8a8a,#bdbdbd);gap:8px;margin-bottom:-1px;color:#333}
h1{margin:0 0 0 33.6%;font-size:16px;font-weight:400;white-space:pre;display:flex;gap:24px}
.win{margin-left:auto;margin-right:2px;display:flex}.win button{width:58px;height:36px}
</style><button class="app" aria-label="menu"><svg width="18" height="20" viewBox="0 0 18 20"><path d="M0 20L8 0h3l6 20h-5l-1-5-5 1-2 4z" fill="#c52010"/><path d="M8 0L0 20h4l3-7 4-2z" fill="#e65a3a"/><path d="M9 6l-2 6 4-1z" fill="#500"/></svg>${tri(8)}</button>
<h1><span>Autodesk AutoCAD 2014</span><span>Drawing1.dwg</span></h1>
<div class="win"><button aria-label="minimize"><svg width="14" height="14"><path d="M1 7.500h12" stroke="#888"/></svg></button><button aria-label="maximize"><svg width="14" height="14"><path d="M1.500 1.500h11v11h-11z" fill="none" stroke="#888"/></svg></button><button aria-label="close"><svg width="14" height="14"><path d="M1 2l11 11M12 2L1 13" stroke="#e2e2e2"/></svg></button></div>`);

define('tool-rows',()=>`<style>:host{display:flex;flex-direction:column;gap:3px;flex:none;overflow:hidden}div{display:flex;gap:2px}</style>
<div><tool-bar items="~库. table. ~塑. cross. blk. circg. curl. calc2. ~词."></tool-bar></div>
<div><tool-bar items="dlin dali darc dord | drad djog ddia dang | qdim dbas dcon dspc dbrk | tol cmark dinsp djl | dedit dtedit dupd | =ISO-25 dsty"></tool-bar>
<tool-bar items="new open save | print prev pub ball | cut copy paste match mspec | undo , redo , | pan zrt zwin. zprev | prop dc tp ssm mark calc | help"></tool-bar>
<tool-bar items="curl mir2 sq4 v2 kk brush flag flag2 mir arr arr2 uarr z0 rr ext para dsq coil coil2 gear2 broom plus2 sqin disk disk2"></tool-bar></div>
<div><tool-bar items="new open save | print prev pub ball | match mspec | undo , redo , | prop dc tp ssm mark calc | help"></tool-bar>
<tool-bar items="rot. scale. line2. stamp. chf. fil."></tool-bar>
<tool-bar items="tsty =Standard | dsty =ISO-25 | tbsty =Standard | mlsty =Standard"></tool-bar>
<tool-bar items="lay3 lay3 ~中 ~水 ~仁 ~尺 ~顶 ~表 ~填 ~镶 ~斜 ~模 ~产 ~流 ~螺 ~滑 ~撑 ~弹 ~标 ~临 ~字"></tool-bar></div>
<div><tool-bar items="~建. ~隐. bars. lay3. chk. dots."></tool-bar>
<tool-bar items="laypr * laya layb laypr"></tool-bar>
<tool-bar items="cross ibeam dd ten aa mm zz xx hh hh2 vv vv2 hat ldot lgz ~長 boxr arcs hdim back rect2 hash hl vl vs"></tool-bar>
<tool-bar items="~词 zi f1 ab ai zix"></tool-bar>
<tool-bar items="~隐 ~显 kb1 kb2 ab1 ab2 bb1 bb2"></tool-bar></div>`);

define('drawing-canvas',()=>`<style>${base}
:host{display:block;position:relative;flex:1;min-width:0;background:#000;overflow:hidden}
.grid{position:absolute;inset:0;width:100%;height:100%}
.ucs{position:absolute;left:10px;bottom:5px}
.ctl{position:absolute;right:6px;top:5px;display:flex}.ctl button{width:20px;height:20px}
.mtext{position:absolute;left:869px;top:421px;width:48px;height:40px;border:1px solid #666;color:#fff;font:30px/26px "Liberation Sans",sans-serif;white-space:nowrap}
</style><svg class="grid" fill="none"><path class="minor" stroke="#17171a"/><path class="major" stroke="#303036"/></svg>
<svg class="ucs" width="80" height="80" fill="none" stroke="#fff"><path d="M8.500 17v50M8 66.500h51M3.500 61.500h10v10h-10z"/></svg>
<svg class="ucs" width="90" height="90" fill="#fff" font-family="Lato, sans-serif" font-weight="300" font-size="19"><text x="10" y="22">Y</text><text x="63" y="75">X</text></svg>
<div class="mtext">45°</div>
<div class="ctl"><button aria-label="min"><svg width="12" height="12"><path d="M1 8h10v3H1z" fill="#fff"/></svg></button><button aria-label="restore"><svg width="12" height="12" fill="none" stroke="#fff" stroke-width="2"><path d="M2 4h6v6H2zM4 1.500h7V8"/></svg></button><button aria-label="close"><svg width="12" height="12" stroke="#fff" stroke-width="2"><path d="M2 2l8 8M10 2l-8 8"/></svg></button></div>`,
el=>{const lines=(off,vert,major)=>{let d='';for(let k=0;k<300;k++){if((k%5===0)!==major)continue;const c=Math.round(off+k*13.28)+.5;d+=vert?`M${c} 0V2200`:`M0 ${c}H3900`}return d};
 el.shadowRoot.querySelector('.minor').setAttribute('d',lines(-10,true,false)+lines(-62,false,false));
 el.shadowRoot.querySelector('.major').setAttribute('d',lines(-10,true,true)+lines(-62,false,true))});

define('drawing-window',()=>`<style>${base}
:host{display:flex;flex-direction:column;flex:1;min-width:0;border:2px solid #fff;border-top-color:#9a9a9a;border-left-color:#9a9a9a}
.view{display:flex;flex:1;min-height:0}
.vs{width:21px;background:#f0f0f0;display:flex;flex-direction:column;align-items:center;color:#505050}
.vs button{width:21px;height:21px}.vs .a{flex:401}.vs .b{flex:242}.vs i{width:19px;height:20px;background:#cdcdcd}
.tabs{display:flex;height:19px;background:#f0f0f0;flex:none}
.tabs .n{width:18px;border-right:1px solid #999}
.tab{font-size:14px;line-height:18px;height:19px}
.t1{width:58px;background:#000;color:#fff;clip-path:polygon(0 0,100% 0,89% 100%,11% 100%)}
.t2{width:50px}.t3{width:54px}
.hs{flex:1;display:flex;align-items:center}.hs .a{flex:1}.hs i{width:21px;height:17px;background:#cdcdcd}.hs .b{flex:0 0 169px}.hs button{width:22px;height:18px;margin-right:20px}
.st{display:flex;justify-content:flex-end;height:24px;border-top:1px solid #000;background:linear-gradient(#959595,#7c7c7c);flex:none}
.st button{width:22px;border:1px solid #555;border-width:1px 1px 0 0;background:linear-gradient(#b0b0b0,#909090)}
.st .sc{width:61px;border-left-width:1px;font:15px/20px "Liberation Mono",monospace;gap:2px;padding-top:2px}
.st .bu{width:25px;margin:2px 5px 2px 4px;background:#8f8f8f;border:1px solid #444}.st .dr{width:11px;border-left-width:1px}
</style>
<div class="view"><drawing-canvas></drawing-canvas><div class="vs"><button aria-label="up"><svg width="12" height="8" fill="none" stroke="#505050" stroke-width="2"><path d="M1 6l5-4 5 4"/></svg></button><span class="a"></span><i></i><span class="b"></span><button aria-label="down"><svg width="12" height="8" fill="none" stroke="#505050" stroke-width="2"><path d="M1 1l5 5 5-5"/></svg></button></div></div>
<div class="tabs">${['first','prv','nxt','last'].map(n=>`<button class="n" aria-label="${n}">${icon(n)}</button>`).join('')}
<button class="tab t1">模型</button><button class="tab t2">布局1</button><svg width="6" height="19"><path d="M6 0L0 19" stroke="#555"/></svg><button class="tab t3">布局2</button><svg width="6" height="19"><path d="M6 0L0 19" stroke="#555"/></svg>
<div class="hs"><span class="a"></span><i></i><span class="b"></span><button aria-label="right"><svg width="8" height="12" fill="none" stroke="#505050" stroke-width="2"><path d="M1 2l5 4-5 4"/></svg></button></div></div>
<div class="st"><button class="sc">${icon('ann')}1:1${tri(8)}</button><button aria-label="a">${icon('annb')}</button><button aria-label="b">${icon('anng')}</button><button class="bu" aria-label="c">${icon('bulbY')}</button><button class="dr" aria-label="d">${tri(6)}</button></div>`);

define('command-line',()=>`<style>${base}
:host{display:flex;height:63px;flex:none}
.h{width:29px;background:linear-gradient(#777,#444);display:flex;flex-direction:column;align-items:center;gap:10px;padding-top:5px}
.h:before{content:"";width:22px;height:6px;background:radial-gradient(circle,#bbb 1px,transparent 1px) 0 0/4px 4px}
.h button{height:12px;width:20px}
.m{flex:1;display:flex;flex-direction:column;border-right:2px solid #777;min-width:0}
p{margin:0;height:36px;background:#c8c8c8;border-bottom:1px solid #777;font:19px/34px "DejaVu Sans Mono","Noto Sans CJK SC",monospace;padding:4px 0 0 4px;white-space:pre;overflow:hidden}
label{display:flex;align-items:center;height:27px;background:#fff;padding-left:7px;gap:5px;color:#888}
label b{font:400 24px/26px "Noto Sans",sans-serif;color:#444}
input{flex:1;font:bold 18px/26px "DejaVu Sans Mono",monospace;color:#000;padding-left:4px}
</style><div class="h"><button aria-label="close"><svg width="12" height="12" stroke="#eee" stroke-width="2"><path d="M1 1l10 10M11 1L1 11"/></svg></button><button aria-label="settings"><svg width="18" height="18" fill="none" stroke="#ddd"><path d="M5 5l10 10" stroke-width="4"/><path d="M2 6c1 4 7 3 6-1L6 2M2 6l3-1" stroke-width="2"/></svg></button></div>
<div class="m"><p>指定对角点或 [高度(H)/对正(J)/行距(L)/旋转(R)/样式(S)/宽度(W)/栏(C)]:</p><label><b>A</b>${tri(7)}<input value="MTEXT" aria-label="command"></label></div>`);

define('status-bar',()=>{const on=[3,6,9,12];return `<style>${base}
:host{display:flex;height:24px;flex:none;border-top:1px solid #000;background:linear-gradient(#7d7d7d,#979797);align-items:stretch;font:15px/22px "Liberation Mono","Noto Sans CJK SC",monospace}
.txt{width:112px;padding:3px 0 0 7px;color:#111;white-space:nowrap;font-size:15px;line-height:20px}
.xyz{width:267px;color:#9f9f9f;font-size:13px;white-space:nowrap}
button{width:22px;border:1px solid #666;border-width:0 1px 0 0;background:linear-gradient(#a2a2a2,#b4b4b4)}
.on{background:linear-gradient(#e8f6fb,#8fcbe0)}
.r{margin-left:auto;display:flex}.w{width:37px;font-size:14px;border-left-width:1px;padding-top:3px}
.ws{width:111px;margin-left:28px;border-left-width:1px;gap:2px;font-size:15px;padding-top:2px}.dr{width:12px;margin-left:7px;border-left-width:1px}
.sz{width:21px;background:radial-gradient(circle,#ddd 1px,transparent 1px) 0 0/4px 4px;clip-path:polygon(100% 40%,100% 100%,45% 100%)}
</style><span class="txt">燕秀字高=2.5</span><span class="xyz">3573.6435, 1175.6869, 0.0000</span>${Array.from({length:15},(_,i)=>`<button class="${on.includes(i+1)?'on':''}" aria-label="mode ${i+1}">${icon('s'+(i+1))}</button>`).join('')}
<div class="r"><button class="w">模型</button><button aria-label="l">${icon('m1')}</button><button aria-label="q">${icon('m2')}</button><button class="ws">${icon('gear')}草图与注释${tri(8)}</button><button aria-label="k">${icon('ulock')}</button><button aria-label="o">${icon('orb')}</button><button class="dr" aria-label="v">${tri(6)}</button><button aria-label="w">${icon('win')}</button><span class="sz"></span></div>`});

define('cad-window',()=>`<style>:host{display:flex;flex-direction:column;flex:1;min-width:0;background:#696969}
.mid{display:flex;flex:1;min-height:0;padding:4px 4px 5px 0;align-items:flex-start;gap:4px}
.c{display:flex;flex-direction:column;flex:none}
drawing-window{align-self:stretch;margin-left:1px}</style>
<title-bar></title-bar><tool-rows></tool-rows>
<div class="mid"><div class="c"><tool-bar vertical items="line xline pline polyg rect arc circ cloud spl ell ella ins. mkb pt hatch grad reg tab A adds"></tool-bar><tool-bar vertical items="ins | at dwg dwf dgn pdf img pc | g1 imp | ole"></tool-bar></div>
<tool-bar vertical items="bars b1 b2 b3 b4 l1 l2 l3 l4 l5 sn o1 o2 o3 st all"></tool-bar>
<drawing-window></drawing-window>
<tool-bar vertical items="r1. r2. r3. r4. r5."></tool-bar></div>
<command-line></command-line><status-bar></status-bar>`);

define('text-format',()=>`<style>${base}
:host{display:block;border:2px solid #fff;border-right-color:#999;border-bottom-color:#999;background:#b4b4b4;padding:6px;font:13px/20px "Liberation Mono","Noto Sans CJK SC",monospace}
.in{border:1px solid #fff;background:#f0f0f0;height:96px}
h2{margin:0;height:28px;background:#99b3d1;font:15px/28px "Noto Sans CJK SC",sans-serif;padding-left:2px;color:#111}
.row{display:flex;align-items:center;height:30px}
.r1{border-bottom:1px solid #999;align-items:flex-start;padding:3px 2px 0;height:33px}
i{width:1px;height:18px;background:#999;flex:none;margin:0 2px}
.r1 i{margin-top:2px}.r1 i:first-child{margin-left:0}
.sd{margin:0 6px}.sp{margin:0 6px 0 2px}.sw{margin:0 8px 0 2px}
.grow{flex:1}.sn{margin-right:4px}
cad-select{height:22px;border:1px solid #a8a8a8;border-radius:2px;background:#e2e2e2;--chevc:#555}
.s1{width:105px;--pad:21px}.s2{width:145px;--pad:20px}.s3{width:60px;--pad:3px;background:#fff;border-radius:0}.s4{width:107px;--pad:20px}
.r1 button{height:22px;width:24px}.r1 .ok{width:58px;font-size:14px}.r1 .ru{width:32px}
.ic{width:24px;height:24px}
</style><div class="in"><h2>文字格式</h2>
<div class="row r1"><i></i><cad-select class="s1" label="style" value="Standard"></cad-select><i></i><cad-select class="s2" label="font" value="Arial" lead="truet"></cad-select>
<button aria-label="annotative">${icon('ann2')}</button><i></i><cad-select class="s3" label="height" value="80"></cad-select>
${['B','It','St','U','O','und','red','ba'].map(n=>`<button aria-label="${n}">${icon(n)}</button>`).join('')}<i></i><cad-select class="s4" label="color" value="ByLayer" lead="sqb"></cad-select><i></i><button class="ru" aria-label="ruler">${icon('rul')}</button><i></i><button class="ok">确定</button><i></i><span class="grow"></span><button aria-label="options">${icon('opt')}</button></div>
<div class="row"><button class="ic" aria-label="columns">${icon('cols')}</button><button aria-label="more">${tri(9)}</button><i class="sd"></i>
<button class="ic" aria-label="justify">${icon('just')}</button><button aria-label="more">${tri(9)}</button><i class="sd"></i>
<button class="ic" aria-label="paragraph">${icon('par')}</button><i class="sw"></i>${['al1','al2','al3','al4','al5'].map(n=>`<button class="ic" aria-label="${n}">${icon(n)}</button>`).join('')}<i class="sp"></i>
<button class="ic" aria-label="spacing">${icon('lsp')}</button><button aria-label="more">${tri(9)}</button><i class="sd"></i>
<button class="ic" aria-label="numbering">${icon('num')}</button><button aria-label="more">${tri(9)}</button><i class="sd"></i>
<button class="ic" aria-label="field">${icon('fld')}</button><i class="sw"></i><button class="ic" aria-label="upper">${icon('uc')}</button><button class="ic" aria-label="lower">${icon('lc')}</button><i></i><span class="grow"></span>
<button class="sn" aria-label="spinner"><svg width="16" height="22"><path d="M.500.500h14v21h-14zM0 11h15" fill="#eee" stroke="#777"/><path d="M4 7h8L8 3zM4 14h8l-4 4z" fill="#000"/></svg></button></div></div>`);

define('symbol-menu',()=>{const a=[['度数(D)','%%d'],['正/负(P)','%%p'],['直径(I)','%%c'],0,['几乎相等','\\U+2248'],['角度','\\U+2220'],['边界线','\\U+E100'],['中心线','\\U+2104'],['差值','\\U+0394'],['电相角','\\U+0278'],['流线','\\U+E101'],['恒等于','\\U+2261'],['初始长度','\\U+E200'],['界碑线','\\U+E102'],['不相等','\\U+2260'],['欧姆','\\U+2126'],['欧米加','\\U+03A9'],['地界线','\\U+214A'],['下标 2','\\U+2082'],['平方','\\U+00B2'],['立方','\\U+00B3'],0,['不间断空格(S)','Ctrl+Shift+Space'],0,['其他(O)...','']];
return `<style>${base}:host{display:block;background:#f1f1f1;border:1px solid #bcbcbc;padding:2px}
button{width:100%;height:24px;justify-content:space-between;padding:0 19px 0 34px;font-size:15px;line-height:22px}
.k{font-size:16px}
button.on{background:#90c8f6}hr{margin:3px 0 3px 29px;border:0;height:1px;background:#d0d0d0}</style>
${a.map((x,i)=>x?`<button role="menuitem" class="${i?'':'on'}"><span>${x[0]}</span><span class="k">${x[1]}</span></button>`:'<hr>').join('')}`});

define('task-bar',()=>`<style>${base}
:host{display:flex;height:77px;flex:none;background:linear-gradient(90deg,#1f2a07,#252e10 30%,#242d0e 80%,#1c2a04);color:#fff}
.sys{display:flex}.sys button{width:44px;height:77px}.sys .ci{width:46px}
.apps{display:flex;gap:11px;margin-left:10px}.apps button{width:35px;height:38px;border-bottom:3px solid #dcf5b4}
.apps .act{width:45px;background:#5a6148;margin:0 -5px}
.apps .half{border-image:linear-gradient(90deg,#dcf5b4 70%,#a9bd8c 0) 3}
.tray{margin-left:auto;display:flex;align-items:center}
.tray button{width:38px;height:38px}
.tray .up{width:32px}
.g{display:grid;grid-template-columns:32px 32px;width:65px}.tray .g button{width:32px;height:38px}
.clk{width:84px;margin-right:12px;text-align:center;font-size:16px;line-height:24px;padding-top:1px}
.tray .pen{width:36px}.tray .ime{font-size:17px;width:32px}
.tray .note{margin-right:16px}.show{border-left:1px solid #667;width:6px;height:77px}
</style>
<div class="sys"><button aria-label="start"><svg width="20" height="20" fill="#fff"><path d="M0 3l8-1v7.500H0zM9 2l11-2v9.500H9zM0 10.500h8V18l-8-1zM9 10.500h11V20L9 18z"/></svg></button><button class="ci" aria-label="search"><svg width="20" height="20" fill="none" stroke="#fff" stroke-width="3"><circle cx="10" cy="10" r="8"/></svg></button><button aria-label="tasks"><svg width="22" height="20" fill="none" stroke="#fff" stroke-width="1"><path d="M1.500 0v3.500h12V0M1.500 20v-3.500h12V20M2 6h11v8H2zM19.500 0v3M19.500 12v8"/><path d="M18 6h4v4h-4z" fill="#fff" stroke="none"/></svg></button></div>
<div class="apps">
<button aria-label="cloud"><svg width="20" height="20" fill="none"><rect width="20" height="20" rx="4" fill="#fff"/><circle cx="10" cy="7" r="3" stroke="#e88" stroke-width="2"/><circle cx="6" cy="12" r="3" stroke="#39f" stroke-width="2"/><circle cx="14" cy="12" r="3" stroke="#2bd" stroke-width="2"/></svg></button>
<button class="half" aria-label="edge"><svg width="18" height="18" fill="none" stroke="#0a78d4" stroke-width="4"><path d="M4 9h11c0-9-13-9-13 0 0 8 8 8 13 5"/></svg></button>
<button class="half" aria-label="chat"><svg width="22" height="18"><ellipse cx="8" cy="7" rx="8" ry="6.500" fill="#8fd45a"/><path d="M3 11l-1 4 4-2z" fill="#8fd45a"/><ellipse cx="15" cy="11" rx="6.500" ry="5.500" fill="#eee"/><path d="M5 5h2M10 5h2M12 10h2M17 10h1" stroke="#355"/></svg></button>
<button class="act" aria-label="cad"><svg width="20" height="20"><path d="M0 0h20v20H0z" fill="#e33"/><path d="M0 20L20 0v20z" fill="#f99"/><path d="M4 16L9 3h2l6 13-4-1-3-3-3 2z" fill="#611"/></svg></button>
<button aria-label="keys"><svg width="18" height="14"><path d="M1 4l5-3 10 2 1 6-5 4-9-1z" fill="#c5d3e2" stroke="#9ab"/><path d="M5 4l3 5M8 4l-3 5M10 4h4l-2 5" stroke="#235" fill="none"/></svg></button></div>
<div class="tray"><button aria-label="people"><svg width="20" height="20" fill="none" stroke="#fff" stroke-width="1.500"><circle cx="14" cy="4" r="3"/><circle cx="6" cy="11" r="2.500"/><path d="M9 10c1-4 9-4 9 2M2 19c0-7 8-7 8 0"/></svg></button>
<button class="up" aria-label="more"><svg width="18" height="10" fill="none" stroke="#fff" stroke-width="1.500"><path d="M1 9l8-8 8 8"/></svg></button>
<div class="g"><button aria-label="drive"><svg width="20" height="13"><path d="M4 12c-5 0-5-6 0-6 1-7 10-6 10-1 6 0 6 7 1 7z" fill="#fff"/></svg></button><button aria-label="battery"><svg width="20" height="12" fill="none" stroke="#fff"><path d="M3 3.500h15v7H3zM0 2v5h3M19 5v4"/><path d="M6 5h10l-8 5H6z" fill="#fff"/></svg></button><button aria-label="volume"><svg width="20" height="16" fill="none" stroke="#fff"><path d="M1 5.500h3l5-4v13l-5-4H1zM11 5c2 2 2 4 0 6M14 3c3 3 3 7 0 10M17 1c4 4 4 10 0 14"/></svg></button><button aria-label="wifi"><svg width="18" height="16" fill="none" stroke="#fff" stroke-width="1.500"><path d="M1 15C1 7 8 1 17 1M5 15c0-6 5-10 12-10M9 15c0-4 4-6 8-6"/><circle cx="15" cy="14" r="1.500" fill="#fff"/></svg></button></div>
<button class="pen" aria-label="pen"><svg width="20" height="20" fill="none" stroke="#fff" stroke-width="1.500"><path d="M7 13L14 1l3 2-7 12-4 3zM1 15c4-3 6 4 11 1 3-2 5-8 7-6"/></svg></button>
<button class="ime">英</button><div class="clk">13:35<br>星期四<br>2019/3/28</div>
<button class="note" aria-label="notes"><svg width="20" height="20"><path d="M0 0h20v15h-6l-4 4-1-4H0z" fill="#fff"/><path d="M4 4.500h12M4 8h12M4 11.500h8" stroke="#222" stroke-width="1.500"/></svg></button><span class="show"></span></div>`);

define('site-mark',()=>`<style>:host{display:flex;gap:8px;align-items:flex-end;pointer-events:none}
svg{display:block;opacity:.75}div{display:flex;flex-direction:column;color:rgba(205,210,205,.55);white-space:nowrap;padding-bottom:8px}
b{font:900 41px/46px "Noto Sans CJK SC",sans-serif}span{font:700 18px/18px "DejaVu Sans",sans-serif}</style>
<svg width="72" height="84" fill="#2b96b8"><path d="M36 0l35 20v44L36 84 1 64V20z" fill="#248fae" opacity=".7"/><path d="M36 0l35 20-8 8-27-13L1 36V20z" fill="#7cc5dc" opacity=".75"/><path d="M36 84l35-20-26 6L14 46l8 30z" fill="#37a9cf" opacity=".6"/><path d="M36 18l20 12v24L36 66 16 54V30z" fill="#16301c"/><path d="M36 25l13 7-13 8-13-8zM20 36l14 8v15l-14-8zM38 44l14-8v15l-14 8z" fill="#2486a4"/></svg>
<div><b>3D世界网</b><span>www.3DSJW.COM</span></div>`);

define('cad-desktop',()=>`<style>${base}
:host{display:flex;flex-direction:column;height:100vh;position:relative;overflow:hidden}
.wall{flex:1;min-height:0;display:flex;padding:3px 11px 8px 12px;position:relative;
background:linear-gradient(#96b000,#c8b84d 6%,#e8d28c 18%,#e6d488 45%,#c8d850 75%,#7fce00 86%) right/11px 100% no-repeat,linear-gradient(#c4d100,#d8da2a 15%,#f0e070 50%,#ecdf62 72%,#cbd64a 80%,#8acb08 88%,#9acd32) left/12px 100% no-repeat,linear-gradient(#ccd832,#c4d94a) top/100% 3px no-repeat,linear-gradient(90deg,#9acd32,#9bd022 60%,#7fd000)}
.lab{position:absolute;left:2px;width:10px;overflow:hidden;color:#fff;font-weight:700;text-shadow:1px 1px 1px #000,-1px 0 1px #000;line-height:18px}
.l1{top:438px}.l2{top:682px;left:4px;width:8px}
.behind{position:absolute;left:799px;width:711px;bottom:0;height:8px;background:#f2f2f2;border-left:7px solid #fff;box-shadow:inset 1px 0 #999}
text-format{position:absolute;left:544px;top:397px;width:798px}
symbol-menu{position:absolute;left:997px;top:448px;width:316px}
site-mark{position:absolute;right:26px;bottom:12px}
</style><div class="wall"><cad-window></cad-window><span class="lab l1">4</span><span class="lab l2">S</span><span class="behind"></span></div>
<task-bar></task-bar><text-format></text-format><symbol-menu></symbol-menu><site-mark></site-mark>`);
</script>
</body>
</html>
